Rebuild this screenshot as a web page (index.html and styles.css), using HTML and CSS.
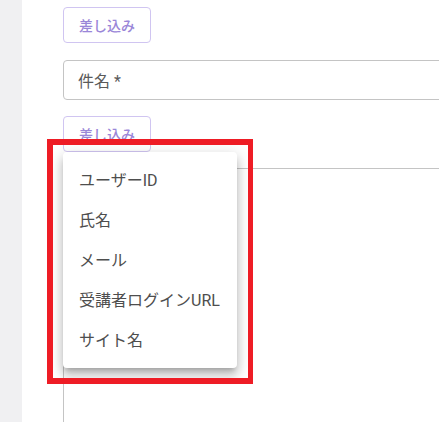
FILE: index.html
```html
<!DOCTYPE html>
<html lang="ja">
<head>
  <meta charset="UTF-8">
  <title>メール編集</title>
  <link rel="stylesheet" href="styles.css">
</head>
<body>
  <div class="layout">
    <aside class="sidebar"></aside>
    <main class="content">
      <div class="field-group">
        <button type="button" class="insert-btn">差し込み</button>
      </div>
      <div class="text-field">
        <span class="field-label">件名 *</span>
      </div>
      <div class="field-group menu-anchor">
        <button type="button" class="insert-btn">差し込み</button>
        <ul class="insert-menu">
          <li>ユーザーID</li>
          <li>氏名</li>
          <li>メール</li>
          <li>受講者ログインURL</li>
          <li>サイト名</li>
        </ul>
      </div>
      <div class="body-field"></div>
    </main>
  </div>
  <div class="highlight"></div>
</body>
</html>
```

FILE: styles.css
```css
html, body {
  margin: 0;
  height: 100%;
  overflow: hidden;
}
body {
  font-family: Roboto, "Noto Sans CJK JP", sans-serif;
  background: #fff;
  color: #444;
}
.layout {
  display: flex;
  height: 100%;
  overflow: hidden;
}
.sidebar {
  width: 22px;
  flex-shrink: 0;
  background: #f0f0f2;
}
.content {
  padding: 7px 0 0 41px;
  flex: 1;
  margin-right: -4px;
  display: flex;
  flex-direction: column;
}
.content > * {
  flex-shrink: 0;
}
.field-group {
  display: flex;
}
.insert-btn {
  font-family: Roboto, "Noto Sans CJK JP", sans-serif;
  font-size: 14px;
  font-weight: 500;
  height: 36px;
  box-sizing: border-box;
  padding: 0 15px;
  margin: 0;
  background: #fff;
  color: #9a86d8;
  border: 1px solid #d0c5f1;
  border-radius: 4px;
  cursor: pointer;
}
.text-field {
  height: 40px;
  box-sizing: border-box;
  border: 1px solid #c4c4c4;
  border-radius: 4px;
  display: flex;
  align-items: center;
  padding: 0 14px;
  margin: 17px 0 16px;
}
.field-label {
  font-size: 16px;
  color: #5a5a5a;
}
.menu-anchor {
  position: relative;
}
.insert-menu {
  position: absolute;
  top: 100%;
  left: 0;
  width: 174px;
  margin: 0;
  padding: 8px 0;
  list-style: none;
  background: #fff;
  border-radius: 4px;
  box-shadow: 0 5px 5px -3px rgba(0,0,0,0.2), 0 8px 10px 1px rgba(0,0,0,0.14), 0 3px 14px 2px rgba(0,0,0,0.12);
  z-index: 2;
}
.insert-menu li {
  font-size: 16px;
  line-height: 24px;
  padding: 9px 16px 7px;
  color: #4e4e4e;
  white-space: nowrap;
}
.body-field {
  margin-top: 16px;
  height: 300px;
  border: 1px solid #c4c4c4;
  border-radius: 4px 0 0 0;
}
.highlight {
  position: absolute;
  left: 47px;
  top: 139px;
  width: 206px;
  height: 245px;
  box-sizing: border-box;
  border: 6px solid #ee1c25;
  border-right-width: 5px;
  z-index: 3;
}
```
